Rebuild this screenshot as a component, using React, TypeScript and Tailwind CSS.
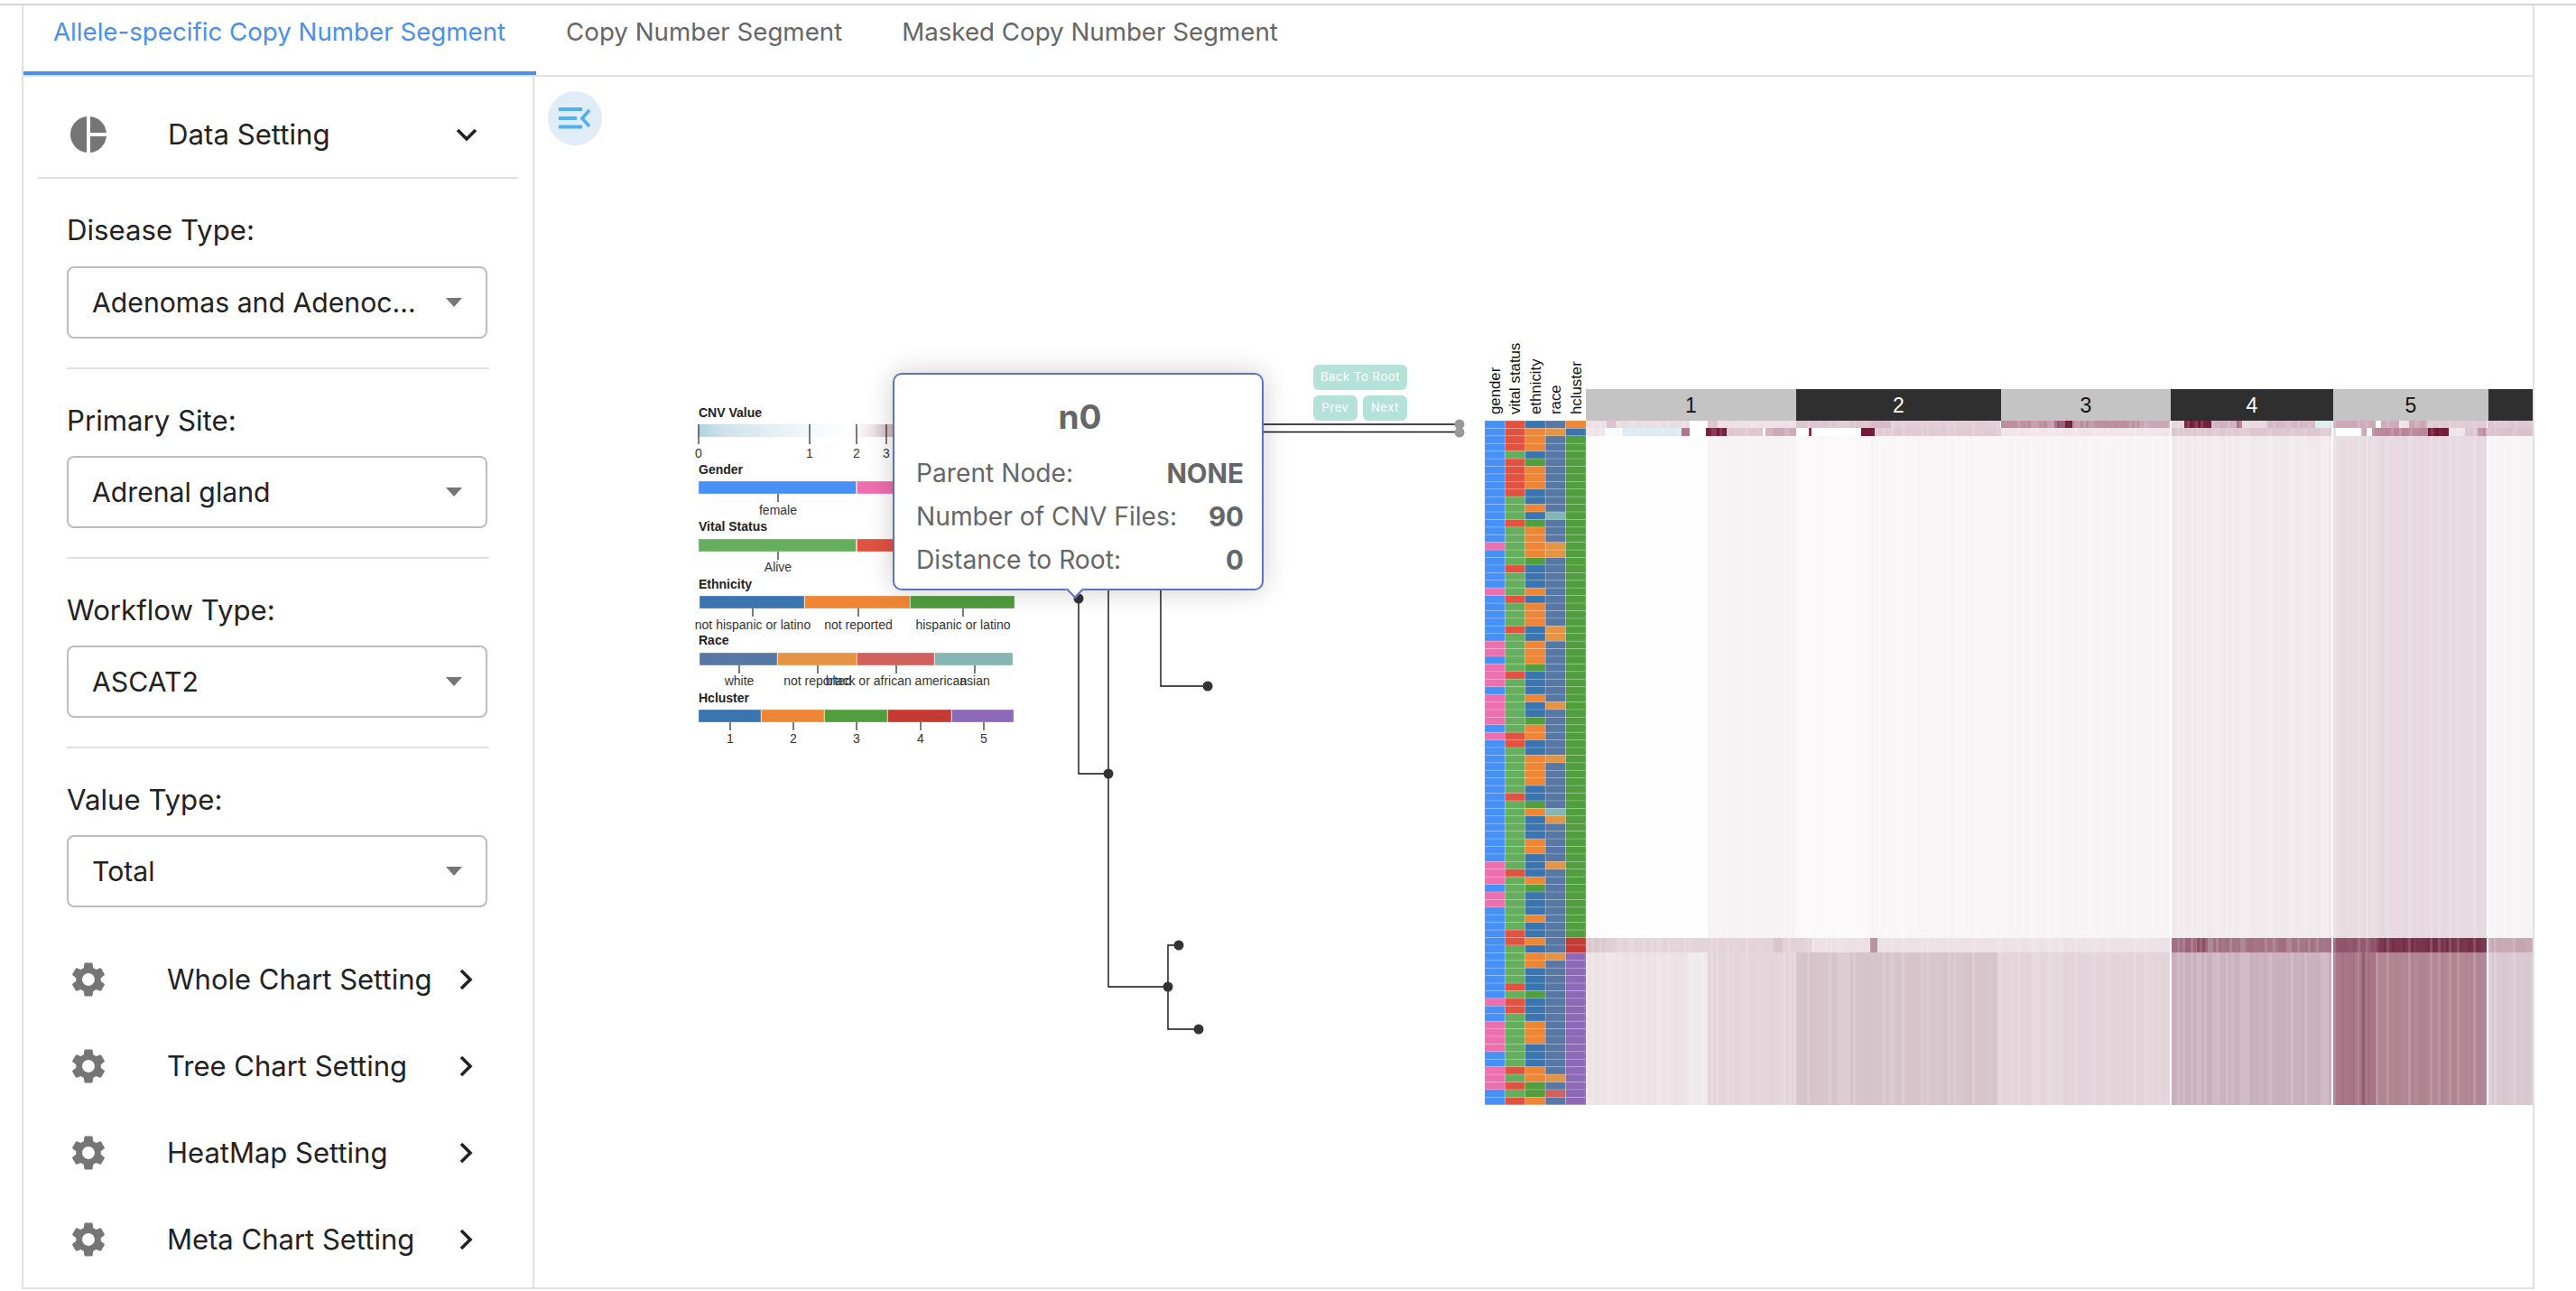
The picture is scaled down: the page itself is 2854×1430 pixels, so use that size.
import React from "react";

const SANS = "font-['Inter',sans-serif]";
const GEAR =
  "M19.14 12.94c.04-.3.06-.61.06-.94 0-.32-.02-.64-.07-.94l2.03-1.58a.49.49 0 0 0 .12-.61l-1.92-3.32a.488.488 0 0 0-.59-.22l-2.39.96c-.5-.38-1.03-.7-1.62-.94l-.36-2.54a.484.484 0 0 0-.48-.41h-3.84c-.24 0-.43.17-.47.41l-.36 2.54c-.59.24-1.13.57-1.62.94l-2.39-.96c-.22-.08-.47 0-.59.22L2.74 8.87c-.12.21-.08.47.12.61l2.03 1.58c-.05.3-.09.63-.09.94s.02.64.07.94l-2.03 1.58a.49.49 0 0 0-.12.61l1.92 3.32c.12.22.37.29.59.22l2.39-.96c.5.38 1.03.7 1.62.94l.36 2.54c.05.24.24.41.48.41h3.84c.24 0 .44-.17.47-.41l.36-2.54c.59-.24 1.13-.56 1.62-.94l2.39.96c.22.08.47 0 .59-.22l1.92-3.32c.12-.22.07-.47-.12-.61l-2.01-1.58zM12 15.6c-1.98 0-3.6-1.62-3.6-3.6s1.62-3.6 3.6-3.6 3.6 1.62 3.6 3.6-1.62 3.6-3.6 3.6z";

/* ---------- sidebar ---------- */
function Select({ label, value, first }: { label: string; value: string; first?: boolean }) {
  return (
    <div className={first ? "mt-[37px]" : "mt-[36px]"}>
      <div className={first ? "h-[40px] text-[31.2px] leading-[40px] text-[#222]" : "h-[40px] pt-[1px] text-[31.2px] leading-[40px] text-[#222]"}>{label}</div>
      <div className="mt-[20px] flex h-[80px] w-[466px] items-center justify-between rounded-[8px] border-2 border-[#bdbdbd] pl-[26px] pr-[26px]">
        <span className="pt-[1px] text-[30.2px] text-[#222]">{value}</span>
        <span className="h-0 w-0 border-x-[9.5px] border-t-[10px] border-x-transparent border-t-[#757575]" />
      </div>
    </div>
  );
}

function SettingRow({ title }: { title: string }) {
  return (
    <div className="flex h-[96px] items-center">
      <svg viewBox="0 0 24 24" className="ml-[49px] h-[46px] w-[46px] fill-[#757575]">
        <path d={GEAR} />
      </svg>
      <span className="ml-[64px] w-[323px] text-[31px] text-[#222]">{title}</span>
      <svg viewBox="0 0 16 24" className="h-[24px] w-[16px] fill-none stroke-[#222] stroke-[3.6]">
        <path d="M3 2l10 10L3 22" />
      </svg>
    </div>
  );
}

function Sidebar() {
  return (
    <aside className="w-[566px] shrink-0 border-r-2 border-[#e0e0e0]">
      <div className="mx-[16px] flex h-[113px] items-center border-b-2 border-[#e0e0e0] pt-[16px]">
        <svg viewBox="0 0 40 40" className="ml-[36px] h-[40px] w-[40px] fill-[#757575]">
          <path d="M18 .1A20 20 0 0 0 18 39.9Z" />
          <path d="M22 .1A20 20 0 0 1 39.9 18H22Z" />
          <path d="M22 22H39.9A20 20 0 0 1 22 39.9Z" />
        </svg>
        <span className="ml-[68px] mt-[2px] w-[319px] text-[31.2px] text-[#222]">Data Setting</span>
        <svg viewBox="0 0 24 16" className="h-[16px] w-[24px] fill-none stroke-[#222] stroke-[3.6]">
          <path d="M2 3l10 10L22 3" />
        </svg>
      </div>
      <div className="px-[48px]">
        <Select first label="Disease Type:" value="Adenomas and Adenoc..." />
        <div className="mt-[32px] h-[2px] bg-[#e0e0e0]" />
        <Select label="Primary Site:" value="Adrenal gland" />
        <div className="mt-[32px] h-[2px] bg-[#e0e0e0]" />
        <Select label="Workflow Type:" value="ASCAT2" />
        <div className="mt-[32px] h-[2px] bg-[#e0e0e0]" />
        <Select label="Value Type:" value="Total" />
      </div>
      <div className="mt-[32px]">
        <SettingRow title="Whole Chart Setting" />
        <SettingRow title="Tree Chart Setting" />
        <SettingRow title="HeatMap Setting" />
        <SettingRow title="Meta Chart Setting" />
      </div>
    </aside>
  );
}

/* ---------- chart data ---------- */
const C: Record<string, string> = {
  bl: "#4790f8",
  pk: "#ee6fb0",
  gn: "#65ae5d",
  rd: "#e25240",
  b: "#3b75af",
  o: "#ef8636",
  g: "#519e3e",
  c: "#c53a32",
  p: "#8d69b8",
  rb: "#5778a4",
  ro: "#e49444",
  rr: "#d1615d",
  rt: "#85b6b2",
};

const r = (s: string, n: number) => s.repeat(n);
const GENDER = r("b", 16) + "p" + r("b", 5) + "p" + r("b", 6) + "ppbpppbppppbp" + r("b", 16) + "pppbpp" + r("b", 12) + "p" + "bb" + "pppp" + "bb" + "ppp" + "bb";
const VITAL = "rrrrgrrrrrgggrgggggrgggrg" + "ggrgggggrgggggggrrggggggrgggggggggrggg" + "ggggrrgggggrgrrgggggggrgrgr";
const ETHN = "booobgooobbobgoooogbbbobo" + "oobbooogbbbobbgoobboooobbgobbboobbbogb" + "bbobbob" + "oo" + "bbb" + "g" + "bbb" + "ooo" + "bbb" + "oo" + "gg" + "o";
const RACE = "bo" + r("b", 10) + "t" + "bbb" + "oo" + r("b", 7) + "bboobbbbbbbbobbbbbbobbbbbbtobbbbbobbbb" + r("b", 7) + "o" + r("b", 15) + "obrb";
const HCL = "ob" + r("g", 66) + "cc" + r("p", 20);

const META: { s: string; x: number; m: Record<string, string> }[] = [
  { s: GENDER, x: 1645, m: { b: C.bl, p: C.pk } },
  { s: VITAL, x: 1667.4, m: { g: C.gn, r: C.rd } },
  { s: ETHN, x: 1689.8, m: { b: C.b, o: C.o, g: C.g } },
  { s: RACE, x: 1712.2, m: { b: C.rb, o: C.ro, r: C.rr, t: C.rt } },
  { s: HCL, x: 1734.6, m: { o: C.o, b: C.b, g: C.g, c: C.c, p: C.p } },
];

type Seg = [number, number, string];
const BANDS: { y0: number; y1: number; segs: Seg[] }[] = [
  {
    y0: 466,
    y1: 474.4,
    segs: [
      [1757, 1780, "#ecdfe4"], [1780, 1790, "#d9c0ca"], [1790, 1872, "#e9dce1"], [1872, 1892, "#ffffff"],
      [1892, 1903, "#d9c0ca"], [1903, 1990, "#eddfe4"], [1990, 2073, "#dcc4cd"], [2073, 2095, "#d5b9c4"],
      [2095, 2216, "#e0ccd4"], [2217, 2276, "#bb8b9c"], [2276, 2288, "#97576f"], [2288, 2296, "#6f1a35"],
      [2296, 2370, "#b98a9b"], [2370, 2404, "#c8a4b2"], [2406, 2420, "#e6d6dc"], [2420, 2450, "#701834"],
      [2450, 2478, "#cfb0bc"], [2478, 2484, "#a86f84"], [2484, 2512, "#e6d7dc"], [2512, 2565, "#d3b6c1"],
      [2565, 2584, "#d8ebf1"], [2585, 2632, "#cca6b5"], [2632, 2638, "#ffffff"], [2638, 2658, "#cfa9b8"],
      [2658, 2669, "#efe5e8"], [2669, 2689, "#c9a2b1"], [2689, 2755, "#dfc9d2"], [2756, 2806, "#dcc5ce"],
    ],
  },
  {
    y0: 474.4,
    y1: 482.9,
    segs: [
      [1757, 1778, "#eee3e7"], [1778, 1798, "#f6fafb"], [1798, 1863, "#dcebf1"], [1863, 1872, "#a86f84"],
      [1872, 1890, "#ffffff"], [1890, 1913, "#6e1532"], [1913, 1953, "#ddc6ce"], [1953, 1956, "#ffffff"],
      [1956, 1990, "#c9a8b5"], [1990, 2004, "#ffffff"], [2004, 2007, "#7b2a45"], [2007, 2062, "#ffffff"],
      [2062, 2077, "#6e1532"], [2077, 2217, "#dfc9d1"], [2217, 2404, "#efe4e8"], [2406, 2583, "#dcc5ce"],
      [2585, 2588, "#e8dce1"], [2588, 2616, "#ffffff"], [2616, 2622, "#c9a5b3"], [2622, 2628, "#ffffff"],
      [2628, 2690, "#b58596"], [2690, 2713, "#6e1532"], [2713, 2731, "#efe4e8"], [2731, 2745, "#dcc5ce"],
      [2745, 2754, "#b58596"], [2754, 2806, "#d9c0ca"],
    ],
  },
  {
    y0: 482.9,
    y1: 1038.6,
    segs: [
      [1757, 1892, "#fefdfd"], [1892, 1990, "#f7f2f4"], [1990, 2072, "#fbf8f9"], [2072, 2216, "#f9f5f6"],
      [2216, 2404, "#f8f4f5"], [2406, 2583, "#f0e9ec"], [2585, 2632, "#e8dce1"], [2632, 2755, "#e6d8de"],
      [2757, 2806, "#f8f4f6"],
    ],
  },
  {
    y0: 1038.6,
    y1: 1055.4,
    segs: [
      [1757, 1790, "#d9c6cc"], [1790, 1965, "#e2d2d8"], [1965, 1975, "#d9c3cb"], [1975, 2007, "#e1d0d6"],
      [2007, 2072, "#ecdfe3"], [2072, 2080, "#b590a0"], [2080, 2214, "#ebe0e4"], [2214, 2404, "#ebe1e5"],
      [2406, 2434, "#9c6579"], [2434, 2446, "#8a4a60"], [2446, 2583, "#a06e80"], [2585, 2632, "#8f5268"],
      [2632, 2755, "#742c45"], [2757, 2806, "#c4a5b0"],
    ],
  },
  {
    y0: 1055.4,
    y1: 1224,
    segs: [
      [1757, 1870, "#ebe1e4"], [1870, 1892, "#eee9eb"], [1892, 1990, "#e3d4da"], [1990, 2214, "#d6c3ca"],
      [2214, 2404, "#e2d3d9"], [2406, 2583, "#c8aeba"], [2585, 2614, "#a57183"], [2614, 2620, "#945a6e"],
      [2620, 2632, "#a57183"], [2632, 2755, "#ae8290"], [2757, 2806, "#d8c6cd"],
    ],
  },
];

function rnd(n: number) {
  const v = Math.sin(n * 12.9898) * 43758.5453;
  return v - Math.floor(v);
}
function lighten(hex: string, t: number) {
  const n = parseInt(hex.slice(1), 16);
  const f = (c: number) => Math.round(c + (255 - c) * t);
  return `rgb(${f((n >> 16) & 255)},${f((n >> 8) & 255)},${f(n & 255)})`;
}

function Heat() {
  const cells: React.ReactElement[] = [];
  BANDS.forEach((b, bi) => {
    b.segs.forEach(([x0, x1, col], si) => {
      for (let x = x0; x < x1; x += 3) {
        const t = rnd(x * 1.37) < 0.25 ? 0.17 : rnd(x + bi * 7 + si) * 0.07;
        cells.push(
          <rect key={`${bi}-${si}-${x}`} x={x} y={b.y0} width={Math.min(3, x1 - x)} height={b.y1 - b.y0} fill={lighten(col, t)} />
        );
      }
    });
  });
  return <g shapeRendering="crispEdges">{cells}</g>;
}

function Meta() {
  return (
    <g>
      {META.map((col) =>
        col.s.split("").map((ch, i) => (
          <rect
            key={`${col.x}-${i}`}
            x={col.x}
            y={466 + i * 8.42}
            width={22.4}
            height={8.42}
            fill={col.m[ch] ?? "#5778a4"}
            stroke="#fff"
            strokeOpacity={0.22}
            strokeWidth={0.8}
          />
        ))
      )}
      {["gender", "vital status", "ethnicity", "race", "hcluster"].map((t, i) => (
        <text key={t} transform={`translate(${1662 + i * 22.4},459) rotate(-90)`} fontSize={16.8} fill="#111">
          {t}
        </text>
      ))}
    </g>
  );
}

function Legend() {
  const Title = ({ t, y }: { t: string; y: number }) => (
    <text x={774} y={y + 5} fontSize={14} fontWeight={700} fill="#222">
      {t}
    </text>
  );
  const Bar = ({ y, segs, ticks, labelY }: { y: number; segs: [number, number, string][]; ticks: [number, string][]; labelY: number }) => (
    <g>
      {segs.map(([a, b, c]) => (
        <rect key={a} x={a} y={y} width={b - a} height={14} fill={c} stroke="#fff" strokeOpacity={0.5} strokeWidth={0.6} />
      ))}
      {ticks.map(([x, l]) => (
        <g key={l}>
          <line x1={x} x2={x} y1={y + 14} y2={y + 23} stroke="#222" strokeWidth={1.2} />
          <text x={x} y={labelY + 5} textAnchor="middle" fontSize={14} fill="#333">
            {l}
          </text>
        </g>
      ))}
    </g>
  );
  return (
    <g>
      <defs>
        <linearGradient id="cnv" gradientUnits="userSpaceOnUse" x1={774} x2={1123} y1={0} y2={0}>
          <stop offset="0" stopColor="#add3e2" />
          <stop offset="0.08" stopColor="#cfe3ec" />
          <stop offset="0.35" stopColor="#f3f8fa" />
          <stop offset="0.48" stopColor="#ffffff" />
          <stop offset="0.55" stopColor="#efe6e8" />
          <stop offset="0.62" stopColor="#c9b2bb" />
          <stop offset="1" stopColor="#7b2a45" />
        </linearGradient>
      </defs>
      <Title t="CNV Value" y={457} />
      <rect x={774} y={470} width={349} height={14} fill="url(#cnv)" />
      {[[774, "0"], [897, "1"], [949, "2"], [982, "3"]].map(([x, l]) => (
        <g key={l as string}>
          <line x1={x as number} x2={x as number} y1={470} y2={492} stroke="#222" strokeWidth={1.2} />
          <text x={x as number} y={507} textAnchor="middle" fontSize={14} fill="#333">
            {l}
          </text>
        </g>
      ))}
      <Title t="Gender" y={520} />
      <Bar y={533} segs={[[774, 948.5, C.bl], [949.5, 1123, C.pk]]} ticks={[[862, "female"]]} labelY={565} />
      <Title t="Vital Status" y={583} />
      <Bar y={597} segs={[[774, 948.5, C.gn], [949.5, 1123, C.rd]]} ticks={[[862, "Alive"]]} labelY={628} />
      <Title t="Ethnicity" y={647} />
      <Bar
        y={660}
        segs={[[775, 891, C.b], [891.5, 1008, C.o], [1008.5, 1124, C.g]]}
        ticks={[[834, "not hispanic or latino"], [951, "not reported"], [1067, "hispanic or latino"]]}
        labelY={692}
      />
      <Title t="Race" y={709} />
      <Bar
        y={723}
        segs={[[775, 861, C.rb], [861.5, 949, C.ro], [949.5, 1035, C.rr], [1035.5, 1122, C.rt]]}
        ticks={[[819, "white"], [906, "not reported"], [993, "black or african american"], [1080, "asian"]]}
        labelY={754}
      />
      <Title t="Hcluster" y={773} />
      <Bar
        y={786}
        segs={[[774, 843, C.b], [843.5, 913, C.o], [913.5, 983, C.g], [983.5, 1054, C.c], [1054.5, 1123, C.p]]}
        ticks={[[809, "1"], [879, "2"], [949, "3"], [1020, "4"], [1090, "5"]]}
        labelY={818}
      />
    </g>
  );
}

function Tree() {
  const nodes = [
    [1195, 663],
    [1228, 857],
    [1338, 760],
    [1294, 1093],
    [1306, 1047],
    [1328, 1140],
  ];
  return (
    <g>
      <g fill="none" stroke="#111" strokeWidth={1.4}>
        <path d="M1195 663V857H1228" />
        <path d="M1228 500V1093H1294" />
        <path d="M1286 500V760H1338" />
        <path d="M1306 1047H1294V1140H1328" />
      </g>
      <path d="M1300 470H1617" stroke="#444" strokeWidth={2} />
      <path d="M1300 478.5H1617" stroke="#111" strokeWidth={1.4} />
      <circle cx={1617} cy={470} r={5.5} fill="#999" />
      <circle cx={1617} cy={479} r={5.5} fill="#999" />
      {nodes.map(([x, y]) => (
        <circle key={`${x}-${y}`} cx={x} cy={y} r={5.5} fill="#333" />
      ))}
    </g>
  );
}

function Blocks() {
  const blocks: [number, number, string, string, string][] = [
    [1757, 1990, "#c4c4c4", "#111", "1"],
    [1990, 2217, "#2f2f2f", "#fff", "2"],
    [2217, 2405, "#c4c4c4", "#111", "3"],
    [2405, 2585, "#2f2f2f", "#fff", "4"],
    [2585, 2757, "#c4c4c4", "#111", "5"],
    [2757, 2806, "#2f2f2f", "#fff", ""],
  ];
  return (
    <g>
      {blocks.map(([a, b, bg, fg, l]) => (
        <g key={a}>
          <rect x={a} y={431} width={b - a} height={35} fill={bg} />
          <text x={(a + b) / 2} y={456.5} textAnchor="middle" fontSize={23} fill={fg}>
            {l}
          </text>
        </g>
      ))}
    </g>
  );
}

/* ---------- tooltip ---------- */
function TipRow({ k, v }: { k: string; v: string }) {
  return (
    <div className="flex h-[48px] items-center justify-between text-[#666]">
      <span className="text-[28.2px]">{k}</span>
      <span className="text-[29.5px] font-bold">{v}</span>
    </div>
  );
}

function Main() {
  return (
    <main className="relative h-full flex-1 overflow-hidden">
      <svg
        viewBox="592 85 2214 1339"
        className="block h-[1339px] w-[2214px] font-['Liberation_Sans',Arial,sans-serif]"
      >
        <Legend />
        <Tree />
        <Meta />
        <Blocks />
        <Heat />
      </svg>

      <button className="absolute left-[15px] top-[16px] flex h-[60px] w-[60px] items-center justify-center rounded-full bg-[#e0ecf8]">
        <svg viewBox="0 0 36 24" className="h-[24px] w-[36px] fill-[#4db1ee]">
          <rect x="0" y="0" width="26" height="4" />
          <rect x="0" y="10" width="20" height="4" />
          <rect x="0" y="19.5" width="26" height="4" />
          <path d="M34 3l-8 9 8 9" fill="none" stroke="#4db1ee" strokeWidth="3.6" />
        </svg>
      </button>

      <div className="absolute left-[397px] top-[328px] h-[241px] w-[411px] rounded-[10px] border-2 border-[#5b73c7] bg-white pl-[24px] pr-[20px] pt-[23px] shadow-[0_0_30px_rgba(0,0,0,0.2)]">
        <div className="h-[48px] text-center text-[37px] font-bold leading-[48px] text-[#666]">n0</div>
        <div className="mt-[14px]">
          <TipRow k="Parent Node:" v="NONE" />
          <TipRow k="Number of CNV Files:" v="90" />
          <TipRow k="Distance to Root:" v="0" />
        </div>
        <div className="absolute bottom-[-8px] left-[193px] h-[14px] w-[14px] rotate-45 border-b-2 border-r-2 border-[#5b73c7] bg-white" />
      </div>

      <div className="absolute left-[863px] top-[319px] flex w-[104px] flex-wrap gap-x-[6px] gap-y-[6px]">
        <button className="h-[28px] w-[104px] rounded-[6px] bg-[#b5e2d8] text-[13px] tracking-[0.6px] text-white">Back To Root</button>
        <button className="h-[28px] w-[49px] rounded-[6px] bg-[#b5e2d8] text-[13px] tracking-[0.6px] text-white">Prev</button>
        <button className="h-[28px] w-[49px] rounded-[6px] bg-[#b5e2d8] text-[13px] tracking-[0.6px] text-white">Next</button>
      </div>
    </main>
  );
}

export default function App() {
  const tabs = ["Allele-specific Copy Number Segment", "Copy Number Segment", "Masked Copy Number Segment"];
  return (
    <div className={`h-[1430px] w-[2854px] overflow-hidden bg-white pt-[4px] ${SANS}`}>
      <div className="h-[1424px] border-t-2 border-[#d6d6d6]">
        <div className="mx-[24px] flex h-full w-[2784px] flex-col border-x-2 border-b-2 border-[#e0e0e0]">
          <div className="flex h-[79px] shrink-0 border-b-2 border-[#e0e0e0]">
            {tabs.map((t, i) => (
              <div
                key={t}
                className={
                  i === 0
                    ? "h-[77px] border-b-4 border-[#4a90e8] pl-[33px] pr-[34px] pt-[9px] text-[27.7px] text-[#4a90e8]"
                    : "h-[77px] px-[33px] pt-[9px] text-[27.7px] text-[#666]"
                }
              >
                {t}
              </div>
            ))}
          </div>
          <div className="flex min-h-0 flex-1">
            <Sidebar />
            <Main />
          </div>
        </div>
      </div>
    </div>
  );
}
